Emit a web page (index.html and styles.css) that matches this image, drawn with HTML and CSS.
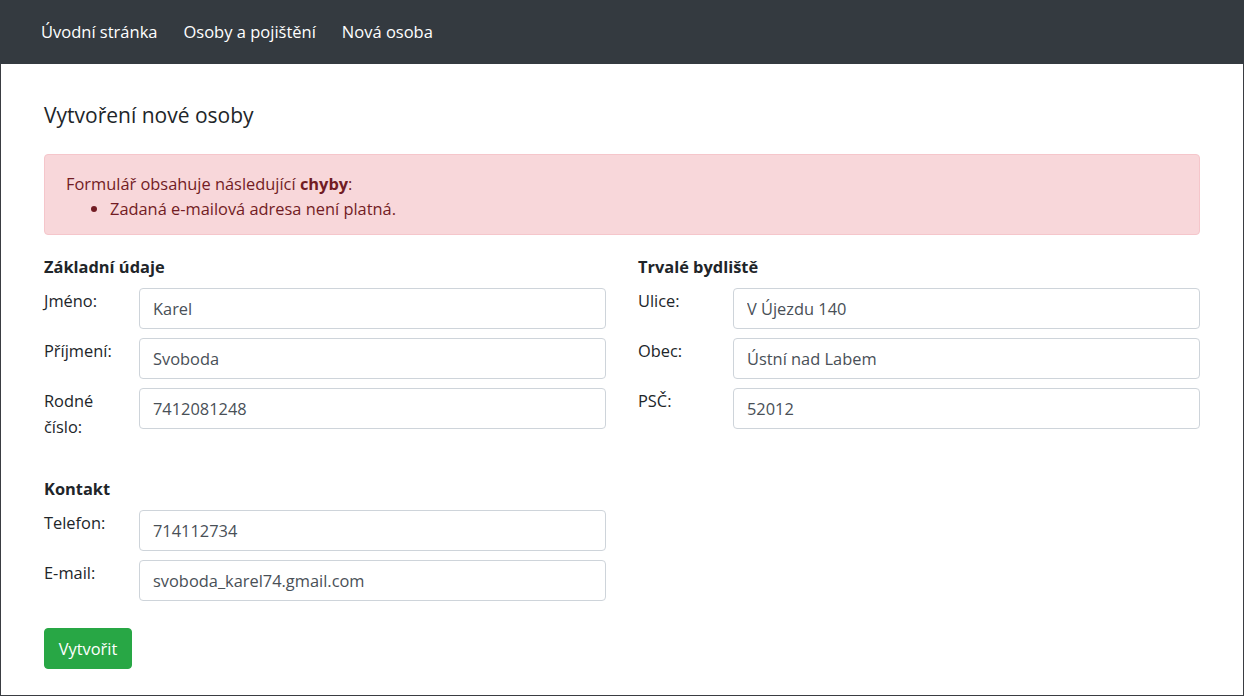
FILE: index.html
```html
<!DOCTYPE html>
<html lang="cs">
<head>
<meta charset="utf-8">
<title>Vytvoření nové osoby</title>
<link rel="stylesheet" href="styles.css">
</head>
<body>
<div class="frame">
  <nav class="navbar">
    <a class="nav-link" href="#">Úvodní stránka</a>
    <a class="nav-link" href="#">Osoby a pojištění</a>
    <a class="nav-link" href="#">Nová osoba</a>
  </nav>
  <main class="content">
    <h1 class="title">Vytvoření nové osoby</h1>
    <div class="alert">
      <div>Formulář obsahuje následující <strong>chyby</strong>:</div>
      <ul class="errors">
        <li>Zadaná e-mailová adresa není platná.</li>
      </ul>
    </div>
    <form class="form">
      <div class="cols">
        <section class="group">
          <h2 class="group-title">Základní údaje</h2>
          <div class="field"><label class="label">Jméno:</label><input class="input" value="Karel"></div>
          <div class="field"><label class="label">Příjmení:</label><input class="input" value="Svoboda"></div>
          <div class="field"><label class="label">Rodné číslo:</label><input class="input" value="7412081248"></div>
        </section>
        <section class="group">
          <h2 class="group-title">Trvalé bydliště</h2>
          <div class="field"><label class="label">Ulice:</label><input class="input" value="V Újezdu 140"></div>
          <div class="field"><label class="label">Obec:</label><input class="input" value="Ústní nad Labem"></div>
          <div class="field"><label class="label">PSČ:</label><input class="input" value="52012"></div>
        </section>
      </div>
      <div class="cols cols-contact">
        <section class="group">
          <h2 class="group-title">Kontakt</h2>
          <div class="field"><label class="label">Telefon:</label><input class="input" value="714112734"></div>
          <div class="field"><label class="label">E-mail:</label><input class="input" value="svoboda_karel74.gmail.com"></div>
        </section>
      </div>
      <button class="btn" type="button">Vytvořit</button>
    </form>
  </main>
</div>
</body>
</html>
```
FILE: styles.css
```css
* { box-sizing: border-box; }
html, body { margin: 0; padding: 0; }
body {
  font-family: "Open Sans", "Noto Sans", sans-serif;
  font-size: 16.4px;
  color: #212529;
  background: #fff;
}
.frame {
  min-height: 100vh;
  border: 1px solid #3a3d42;
  border-top: 0;
  display: flex;
  flex-direction: column;
}
.navbar {
  height: 64px;
  background: #343a40;
  display: flex;
  align-items: center;
  padding-left: 41px;
  gap: 26px;
  margin: 0 -1px;
}
.nav-link {
  color: #fff;
  text-decoration: none;
  font-size: 16.5px;
  line-height: 24px;
}
.content {
  padding: 37px 43px 0 43px;
}
.title {
  margin: 0 0 25px;
  font-weight: 400;
  font-size: 21px;
  line-height: 28px;
  color: #212529;
}
.alert {
  background: #f8d7da;
  border: 1px solid #f5c6cb;
  border-radius: 4px;
  color: #721c24;
  padding: 16px 21px 13px;
  line-height: 25px;
}
.alert strong { font-weight: 700; }
.errors {
  margin: 0;
  padding-left: 44px;
}
.form { margin-top: 19px; }
.cols {
  display: grid;
  grid-template-columns: 1fr 1fr;
  column-gap: 32px;
}
.cols-contact { margin-top: 27px; }
.group-title {
  margin: 0 0 8px;
  font-size: 16.4px;
  font-weight: 700;
  line-height: 26px;
}
.field {
  display: flex;
  align-items: flex-start;
  margin-bottom: 9px;
}
.label {
  width: 95px;
  flex: none;
  line-height: 26px;
  padding-right: 10px;
}
.input {
  flex: 1;
  min-width: 0;
  height: 41px;
  border: 1px solid #ced4da;
  border-radius: 4px;
  padding: 0 13px;
  font-family: inherit;
  font-size: 16.4px;
  color: #495057;
  background: #fff;
}
.btn {
  margin-top: 18px;
  height: 41px;
  width: 88px;
  border: 1px solid #28a745;
  border-radius: 4px;
  background: #28a745;
  color: #fff;
  font-family: inherit;
  font-size: 16.4px;
  padding: 0;
}
```
